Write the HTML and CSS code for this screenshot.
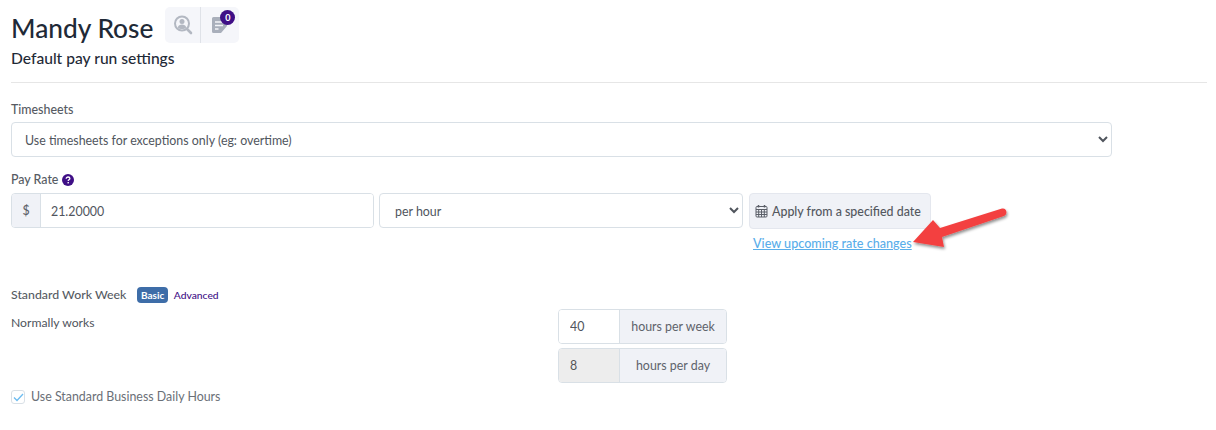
FILE: index.html
```html
<!DOCTYPE html>
<html lang="en">
<head>
<meta charset="utf-8">
<title>Mandy Rose</title>
<link rel="stylesheet" href="styles.css">
</head>
<body>
<div class="page">
  <header class="head">
    <h1 class="name">Mandy Rose</h1>
    <div class="tools">
      <span class="tool tool-l">
        <svg width="20" height="20" viewBox="0 0 20 20" fill="none">
          <circle cx="9" cy="8.5" r="7" stroke="#b3b8c2" stroke-width="2"/>
          <path d="M14 14l4 4" stroke="#b3b8c2" stroke-width="2.6" stroke-linecap="round"/>
          <circle cx="9" cy="6.6" r="2.5" fill="#b3b8c2"/>
          <path d="M4.8 12.6c.5-2.2 2.2-3 4.2-3s3.700.8 4.200 3c-1 1-2.500 1.500-4.200 1.500s-3.200-.5-4.200-1.500z" fill="#b3b8c2"/>
        </svg>
      </span>
      <span class="tool tool-r">
        <svg width="18" height="18" viewBox="0 0 18 18">
          <path d="M1 2.500A1.500 1.500 0 0 1 2.500 1h12A1.500 1.500 0 0 1 16 2.500V10l-6 7H2.500A1.500 1.500 0 0 1 1 15.500z" fill="#a9afbb"/>
          <path d="M4 6h8M4 9.500h8M4 13h3.500" stroke="#f4f5f9" stroke-width="1.500"/>
        </svg>
        <span class="badge">0</span>
      </span>
    </div>
  </header>
  <h2 class="sub">Default pay run settings</h2>
  <hr class="rule">

  <label class="label">Timesheets</label>
  <select class="control wide">
    <option>Use timesheets for exceptions only (eg: overtime)</option>
  </select>

  <div class="label rate-label">Pay Rate
    <svg class="help" width="12" height="12" viewBox="0 0 12 12">
      <circle cx="6" cy="6" r="6" fill="#3f0f86"/>
      <path d="M4.200 4.700c0-1.100.8-1.700 1.900-1.700s1.800.6 1.800 1.500c0 1.300-1.700 1.300-1.700 2.500" fill="none" stroke="#fff" stroke-width="1.300"/>
      <rect x="5.500" y="8" width="1.400" height="1.400" fill="#fff"/>
    </svg>
  </div>
  <div class="rate-row">
    <div class="group amount">
      <span class="addon dollar">$</span>
      <input class="field" value="21.20000">
    </div>
    <select class="control period"><option>per hour</option></select>
    <div class="apply-col">
      <button class="apply">
        <svg width="13" height="14" viewBox="0 0 13 14" fill="none" stroke="#5b5f68">
          <rect x="1" y="2.500" width="11" height="10.500" rx="1"/>
          <path d="M1 5.500h11M1 8h11M1 10.500h11M3.700 5.500V13M6.500 5.500V13M9.300 5.500V13"/>
          <path d="M3.500 1v2.500M9.500 1v2.500" stroke-width="1.500"/>
        </svg>
        Apply from a specified date
      </button>
      <a class="link" href="#">View upcoming rate changes</a>
    </div>
  </div>

  <div class="week-head">
    <span class="label week-title">Standard Work Week</span>
    <span class="pill">Basic</span>
    <a class="adv" href="#">Advanced</a>
  </div>
  <div class="week-body">
    <div class="normal">Normally works</div>
    <div class="hours">
      <div class="group hgroup">
        <input class="field hfield" value="40">
        <span class="addon unit">hours per week</span>
      </div>
      <div class="group hgroup">
        <input class="field hfield off" value="8" disabled>
        <span class="addon unit">hours per day</span>
      </div>
    </div>
  </div>
  <label class="check">
    <span class="box">
      <svg width="11" height="9" viewBox="0 0 11 9" fill="none"><path d="M1 4.500l3 3L10 1" stroke="#6dbcf0" stroke-width="1.300"/></svg>
    </span>
    Use Standard Business Daily Hours
  </label>

  <svg class="arrow" width="100" height="50" viewBox="0 0 100 50">
    <defs>
      <filter id="sh" x="-20%" y="-20%" width="140%" height="150%">
        <feDropShadow dx="1" dy="2" stdDeviation="1.500" flood-color="#000" flood-opacity=".45"/>
      </filter>
    </defs>
    <path d="M3 36L23 14l7 8L92 2.500c5-1 6 6 2 7.500L32 31l2 10z" fill="#f34140" filter="url(#sh)"/>
  </svg>
</div>
</body>
</html>
```
FILE: styles.css
```css
* { box-sizing: border-box; }
html, body { margin: 0; padding: 0; background: #fff; }
body { font-family: Lato, "Open Sans", sans-serif; color: #50555d; font-size: 12.4px; height: 430px; overflow: hidden; }
.page { position: relative; padding: 7px 9px 0 11px; }
.head { display: flex; align-items: flex-start; height: 36px; }
.name { margin: 6px 0 0; font-size: 26.3px; line-height: 30px; font-weight: 500; color: #1f2a37; }
.tools { display: flex; margin-left: 12px; }
.tool { position: relative; display: flex; align-items: center; justify-content: center; width: 36px; height: 36px; background: #f5f6fa; }
.tool-l { border-radius: 5px 0 0 5px; border-right: 1px solid #dfe2e8; }
.tool-r { border-radius: 0 5px 5px 0; width: 38px; }
.badge { position: absolute; top: 3px; right: 4px; width: 15px; height: 15px; border-radius: 50%; background: #3f0f86; color: #fff; font-size: 9px; font-weight: 700; line-height: 15px; text-align: center; }
.sub { margin: 6px 0 0; font-size: 15.6px; line-height: 18px; font-weight: 500; color: #1f2a37; }
.rule { margin: 15px 0 0; border: 0; border-top: 1px solid #e6e6e6; }
.label { display: block; font-size: 12.4px; line-height: 14px; font-weight: 500; color: #565b63; }
.rule + .label { margin-top: 20px; }
.control { display: block; height: 35px; background: #fff; border: 1px solid #d9e0e6; border-radius: 4px; padding: 1px 9px 0; font: 12.4px Lato, sans-serif; color: #50555d; }
.wide { width: 1101px; margin-top: 5px; }
.rate-label { margin-top: 16px; display: flex; align-items: center; gap: 4px; }
.rate-row { display: flex; align-items: flex-start; gap: 6px; margin-top: 6px; }
.group { display: flex; height: 35px; border: 1px solid #d9e0e6; border-radius: 4px; overflow: hidden; }
.amount { width: 363px; }
.amount .field { padding-top: 1px; }
.addon { display: flex; align-items: center; justify-content: center; background: #f0f2f7; color: #5e636b; font-size: 12.4px; }
.dollar { width: 29px; border-right: 1px solid #d9e0e6; font-weight: 500; }
.field { flex: 1; min-width: 0; border: 0; padding: 0 10px; font: 12.4px Lato, sans-serif; color: #50555d; background: #fff; outline: 0; }
.period { width: 364px; margin-left: -1px; padding-left: 11px; }
.apply-col { display: flex; flex-direction: column; align-items: flex-start; }
.apply { display: flex; align-items: center; gap: 4px; height: 36px; width: 182px; padding: 0 5px; background: #f0f2f7; border: 1px solid #e4e7ee; border-radius: 4px; font: 500 12.4px Lato, sans-serif; color: #54585f; white-space: nowrap; }
.link { margin: 8px 0 0 4px; font-size: 12.6px; line-height: 14px; font-weight: 500; color: #5aaeea; }
.week-head { display: flex; align-items: center; margin-top: 36px; height: 16px; }
.week-title { font-size: 12.3px; }
.pill { margin-left: 11px; padding: 0 3.500px; height: 16px; line-height: 16px; border-radius: 4px; background: #3e6da8; color: #fff; font-size: 10px; font-weight: 700; }
.adv { margin-left: 6px; font-size: 10.3px; font-weight: 500; color: #3f0f86; text-decoration: none; }
.week-body { display: flex; align-items: flex-start; margin-top: 6px; }
.normal { width: 547px; margin-top: 7px; line-height: 14px; font-size: 12.2px; }
.hours { display: flex; flex-direction: column; gap: 4px; }
.hgroup { width: 169px; height: 35px; }
.hfield { flex: 0 0 61px; padding: 0 11px; border-right: 1px solid #d9e0e6; }
.off { background: #ededed; color: #555; }
.unit { flex: 1; }
.check { display: flex; align-items: center; gap: 6px; margin-top: 7px; line-height: 14px; font-size: 12.4px; color: #6a6f77; }
.box { display: flex; align-items: center; justify-content: center; width: 14px; height: 14px; border: 1px solid #d9e0e6; border-radius: 3px; }
.arrow { position: absolute; left: 910px; top: 206px; }
```
